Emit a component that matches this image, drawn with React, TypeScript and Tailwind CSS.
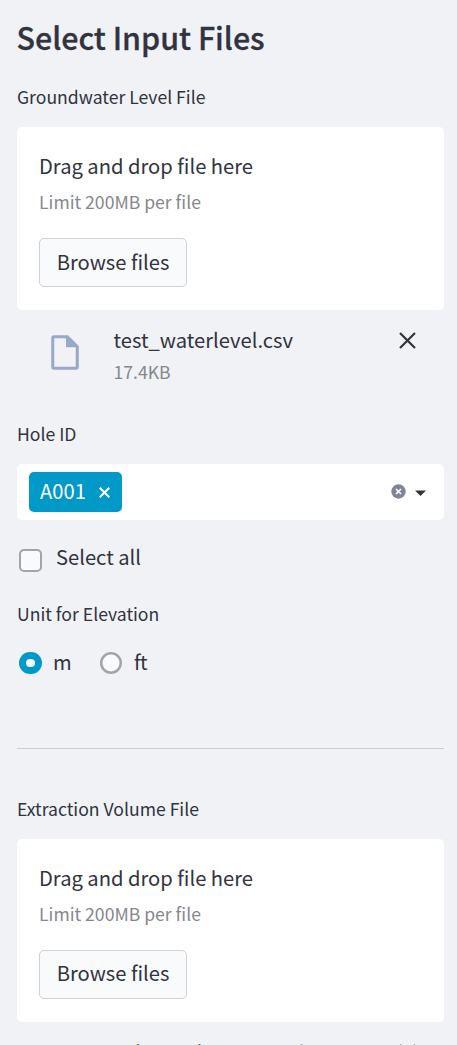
import React from "react";

function Label({ children, className = "" }: { children: React.ReactNode; className?: string }) {
  return <div className={`h-6 text-[17.6px] leading-6 ${className}`}>{children}</div>;
}

function Uploader({ buttonClass = "pb-[2px]" }: { buttonClass?: string }) {
  return (
    <section className="h-[183px] rounded-[5px] bg-white pl-[22px] pt-[23px]">
      <div className="h-8 text-[20.17px] leading-8">Drag and drop file here</div>
      <div className="mt-[8px] h-6 text-[17.6px] leading-6 text-[#85878e]">Limit 200MB per file</div>
      <button className={`mt-[24px] block h-[49px] w-[148px] rounded-[5px] border border-[#d0d1d5] bg-[#f9fafc] text-[20.17px] ${buttonClass}`}>
        Browse files
      </button>
    </section>
  );
}

function Close() {
  return (
    <svg className="size-[17px]" viewBox="0 0 17 17" fill="none" stroke="#31333f" strokeWidth="2.2">
      <path d="M1 1 16 16M16 1 1 16" />
    </svg>
  );
}

function FileRow({ name, size }: { name: string; size: string }) {
  return (
    <div className="flex h-[76px] pl-[34px] pr-[28px]">
      <svg className="mt-[25px] h-[35px] w-[28px]" viewBox="0 0 28 35" fill="none">
        <path d="M3 1.75H16.5L26.25 11.5V32Q26.25 33.25 25 33.25H3Q1.75 33.25 1.75 32V3Q1.75 1.75 3 1.75Z" stroke="#98a8c9" strokeWidth="3" />
        <path d="M15 1H17L27 11V12.3H15Z" fill="#98a8c9" />
      </svg>
      <div className="ml-[34.5px] flex-1 pt-[14px]">
        <div className="h-8 whitespace-nowrap text-[20.17px] leading-8">{name}</div>
        <div className="mt-[4px] h-6 text-[17.6px] leading-6 text-[#85878e]">{size}</div>
      </div>
      <button className="mt-[22px] h-[17px]" aria-label="Remove"><Close /></button>
    </div>
  );
}

export default function App() {
  return (
    <main className="h-[1045px] w-[457px] overflow-hidden bg-[#f0f2f6] pl-[17px] pr-[13px] pt-[14px] font-['Noto_Sans_CJK_JP','Noto_Sans',sans-serif] text-[#31333f]">
      <h1 className="-ml-[0.5px] h-[46px] text-[30.4px] font-medium leading-[46px] [-webkit-text-stroke:0.3px_#31333f]">Select Input Files</h1>
      <Label className="mt-[25px]">Groundwater Level File</Label>
      <div className="mt-[18px]"><Uploader buttonClass="pb-0" /></div>
      <FileRow name="test_waterlevel.csv" size="17.4KB" />
      <Label className="mt-[36px]">Hole ID</Label>
      <div className="mt-[18px] flex h-[56px] items-center rounded-[5px] bg-white pl-[12px] pr-[18px]">
        <span className="flex h-[40px] w-[93px] items-center justify-between rounded-[5px] bg-[#0099c8] pl-[11px] pr-[12px] text-[20.17px] text-white">
          <span className="pb-[2px]">A001</span>
          <svg className="size-[11px]" viewBox="0 0 11 11" stroke="white" strokeWidth="2"><path d="M.7.7l9.6 9.6M10.3.7.7 10.3" /></svg>
        </span>
        <svg className="mb-px ml-auto size-[15px]" viewBox="0 0 15 15">
          <circle cx="7.5" cy="7.5" r="7.2" fill="#808495" />
          <path d="M5 5l5 5M10 5l-5 5" stroke="white" strokeWidth="1.7" />
        </svg>
        <svg className="ml-[9px] mt-px h-[6px] w-[11px]" viewBox="0 0 11 6"><path d="M0 .5H11L5.5 6Z" fill="#31333f" /></svg>
      </div>
      <label className="mt-[21px] flex h-8 text-[20.17px] leading-8">
        <span className="ml-[2px] mt-[8px] h-[23px] w-[23px] rounded-[5px] border-2 border-[#a3a4ab] bg-[#f9fafc]" />
        <span className="ml-[14px]">Select all</span>
      </label>
      <Label className="mt-[29px]">Unit for Elevation</Label>
      <div className="mt-[20px] flex h-8 items-center text-[20.17px] leading-8">
        <span className="ml-[2px] mt-px flex h-[22px] w-[23px] items-center justify-center rounded-full bg-[#0099c8]">
          <span className="h-[8px] w-[9px] rounded-full bg-[#f9fafc]" />
        </span>
        <span className="ml-[11px] w-[46px]">m</span>
        <svg className="ml-[1px] mt-px size-[22px]" viewBox="0 0 22 22">
          <circle cx="11" cy="11" r="9.75" fill="#f9fafc" stroke="#a3a4ab" strokeWidth="2.5" />
        </svg>
        <span className="ml-[12px] tracking-[-0.6px]">ft</span>
      </div>
      <hr className="mt-[70px] border-0 border-t border-[#ccced3]" />
      <Label className="mt-[48px]">Extraction Volume File</Label>
      <div className="mt-[18px]"><Uploader /></div>
      <FileRow name="sub_rand_s_extraction.csv" size="17.4KB" />
    </main>
  );
}
